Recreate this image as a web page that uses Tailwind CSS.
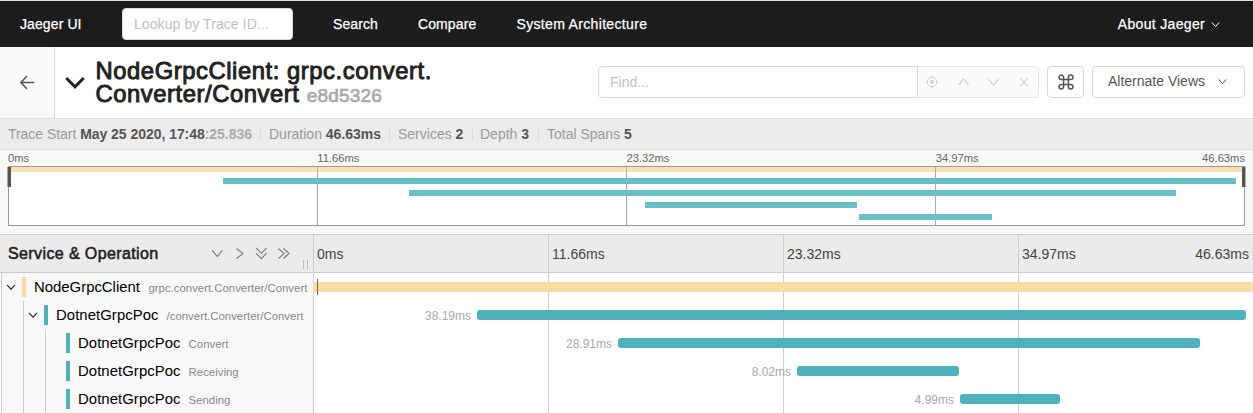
<!DOCTYPE html>
<html lang="en">
<head>
<meta charset="utf-8">
<title>Jaeger UI</title>
<script src="https://cdn.jsdelivr.net/npm/@tailwindcss/browser@4"></script>
</head>
<body class="w-[1253px] h-[413px] overflow-hidden bg-white font-['Liberation_Sans',Arial,sans-serif] text-[14px] text-[#555] whitespace-nowrap">

<!-- Top navigation -->
<nav class="h-[47px] bg-[#1d1d1d] border-t border-[#d9dfe1] flex items-center text-white tracking-[0.33px] [-webkit-text-stroke:0.25px_white]">
  <span class="ml-5 w-[102px] tracking-[0.1px]">Jaeger UI</span>
  <div class="w-[171px] h-8 rounded bg-white border border-[#d9d9d9] px-[11px] flex items-center text-[#bfbfbf] tracking-[0.08px] [-webkit-text-stroke:0]">Lookup by Trace ID...</div>
  <span class="ml-10 w-[85px] tracking-[0.1px]">Search</span>
  <span class="w-[98.5px] tracking-[0.1px]">Compare</span>
  <span>System Architecture</span>
  <span class="ml-auto mr-[33px] flex items-center gap-[6px]">About Jaeger
    <svg class="w-[9px] h-[9px]" viewBox="0 0 9 9" fill="none" stroke="#fff" stroke-width="1"><path d="M.8 2.4 4.5 6.6 8.2 2.4"/></svg>
  </span>
</nav>

<!-- Trace title bar -->
<header class="h-[72px] border-b border-[#e0e0e0] flex items-center">
  <div class="w-[55px] h-full bg-[#fafafa] border-r border-[#d8d8d8] flex items-center">
    <svg class="ml-5 w-[15px] h-[15px]" viewBox="0 0 15 15" fill="none" stroke="#555" stroke-width="1.5"><path d="M14.3 7.5H1M7 .9.9 7.5 7 14.1"/></svg>
  </div>
  <svg class="ml-[10px] w-5 h-[14px]" viewBox="0 0 20 14" fill="none" stroke="#222" stroke-width="3"><path d="M1.3 2 10 10.8 18.7 2"/></svg>
  <h1 class="ml-[10.5px] text-[23.8px] leading-[23px] tracking-[0.56px] text-[#222] [-webkit-text-stroke:0.95px_#222] pt-[1px]">NodeGrpcClient: grpc.convert.<br>Converter/Convert <span class="text-[19px] tracking-[0.2px] text-[#aaa] [-webkit-text-stroke:0.7px_#aaa]">e8d5326</span></h1>
  <div class="ml-auto mr-2 mb-[2px] flex items-center">
    <div class="w-80 h-8 border border-[#d9d9d9] rounded-l px-[11px] pt-[2px] flex items-center text-[#bfbfbf]">Find...</div>
    <div class="w-[121px] h-8 border border-l-0 border-[#e6e6e6] rounded-r bg-[#fafafa] flex items-center text-[#d0d0d0]">
      <svg class="ml-2 mt-px w-3 h-3" viewBox="0 0 12 12" fill="none" stroke="currentColor"><circle cx="6" cy="6" r="4.8"/><circle cx="6" cy="6" r="2" fill="currentColor" stroke="none"/><path d="M6 0v2M6 10v2M0 6h2M10 6h2"/></svg>
      <svg class="ml-5 w-[11px] h-3" viewBox="0 0 11 12" fill="none" stroke="currentColor" stroke-width="1.1"><path d="M.5 8.8 5.5 2.8l5 6"/></svg>
      <svg class="ml-[19px] mt-px w-[11px] h-3" viewBox="0 0 11 12" fill="none" stroke="currentColor" stroke-width="1.1"><path d="M.5 3.2 5.5 9.2l5-6"/></svg>
      <svg class="ml-5 mt-px w-[10px] h-3" viewBox="0 0 10 12" fill="none" stroke="currentColor" stroke-width="1.1"><path d="m.8 1.8 8.4 8.6M9.2 1.8.8 10.4"/></svg>
    </div>
    <div class="ml-2 w-[37px] h-8 border border-[#d9d9d9] rounded flex items-center justify-center">
      <svg class="w-4 h-4" viewBox="0 0 16 16" fill="none" stroke="#555" stroke-width="1.5"><path d="M5.6 5.6V3.3A2.3 2.3 0 1 0 3.3 5.6h9.4a2.3 2.3 0 1 0-2.3-2.3v9.4a2.3 2.3 0 1 0 2.3-2.3H3.3a2.3 2.3 0 1 0 2.3 2.3Z"/></svg>
    </div>
    <div class="ml-2 w-[153px] h-8 border border-[#d9d9d9] rounded pl-[15px] flex items-center">Alternate Views
      <svg class="ml-[13px] w-[9px] h-[9px]" viewBox="0 0 9 9" fill="none" stroke="#555"><path d="M.8 2.4 4.5 6.6 8.2 2.4"/></svg>
    </div>
  </div>
</header>

<!-- Trace summary -->
<section class="h-[31px] bg-[#ececec] border-b border-[#e0e0e0] px-2 flex items-center text-[#999]">
  <span class="w-[253px] border-r border-[#ddd] leading-[13px] tracking-[-0.04px]">Trace Start <b class="text-[#555]">May 25 2020, 17:48</b><b class="text-[#aaa]">:25.836</b></span>
  <span class="pl-2 w-[129px] border-[#ddd] border-r leading-[13px]">Duration <b class="text-[#555]">46.63ms</b></span>
  <span class="pl-2 w-[83px] border-[#ddd] border-r leading-[13px]">Services <b class="text-[#555]">2</b></span>
  <span class="pl-[7px] w-[66px] border-[#ddd] border-r leading-[13px]">Depth <b class="text-[#555]">3</b></span>
  <span class="pl-2 leading-[13px]">Total Spans <b class="text-[#555]">5</b></span>
</section>

<!-- Minimap -->
<section class="h-[85px] bg-[#f8f8f8] border-b border-[#ccc] px-2">
  <div class="h-4 grid grid-cols-4 text-[11.2px] leading-[17px] text-[#666]">
    <span>0ms</span><span>11.66ms</span><span>23.32ms</span>
    <span class="flex justify-between"><span>34.97ms</span><span>46.63ms</span></span>
  </div>
  <div class="relative h-[60px] w-[1237px] border border-[#999] bg-white">
    <div class="flex flex-col gap-[6px]">
      <div class="h-[5px] bg-[#f8e1b5]"></div>
      <div class="h-[6px] bg-[#66c0c8]" style="margin-left:214px;width:1013px"></div>
      <div class="h-[6px] bg-[#66c0c8]" style="margin-left:400px;width:767px"></div>
      <div class="h-[6px] bg-[#66c0c8]" style="margin-left:635.5px;width:212.5px"></div>
      <div class="h-[6px] bg-[#66c0c8]" style="margin-left:850px;width:132.5px"></div>
    </div>
    <div class="absolute inset-y-0 -left-px w-[1236px] grid grid-cols-4">
      <i></i><i class="border-l border-[#aaa]"></i><i class="border-l border-[#aaa]"></i><i class="border-l border-[#aaa]"></i>
    </div>
    <div class="absolute -left-[2px] top-0 w-[4px] h-5 bg-[#555] border-l border-[#aaa]"></div>
    <div class="absolute -right-[2px] top-0 w-[4px] h-5 bg-[#555] border-r border-[#aaa]"></div>
  </div>
</section>

<!-- Timeline header -->
<section class="h-[38px] bg-[#ebebeb] border-b border-[#ccc] flex text-[#444]">
  <div class="w-[313px] pl-2 flex items-center">
    <h2 class="w-[204px] pt-px text-[16px] tracking-[0.39px] text-[#222] [-webkit-text-stroke:0.55px_#222]">Service &amp; Operation</h2>
    <svg class="w-[78px] h-[14px]" viewBox="0 0 78 14" fill="none" stroke="#777" stroke-width="1.1"><path d="M.3 3.2 5.3 9.7 10.3 3.2M24.5 1.5 31 6.5l-6.5 5M44 .9l5.3 5.4L54.6.9M44 6.1l5.3 5.6 5.3-5.6M66.5 1.5 72 6.5l-5.5 5M71.6 1.5 77.200 6.500l-5.600 5"/></svg>
    <div class="self-end mb-[3px] ml-[13px] w-[5px] h-[9px] border-x border-[#bbb]"></div>
  </div>
  <div class="w-[940px] grid grid-cols-4 leading-[38px]">
    <span class="border-l border-[#ccc] pl-[3px]">0ms</span>
    <span class="border-l border-[#ccc] pl-[3px]">11.66ms</span>
    <span class="border-l border-[#ccc] pl-[3px]">23.32ms</span>
    <span class="border-l border-[#ccc] pl-[3px] pr-1 flex justify-between"><span>34.97ms</span><span>46.63ms</span></span>
  </div>
</section>

<!-- Span rows -->
<main class="h-[140px] flex">
  <div class="w-[313px] bg-[#f8f8f8] border-l border-[#ccc] ml-px -mr-px text-[11.4px] text-[#888] flex flex-col">
    <div class="h-7 flex items-center">
      <svg class="ml-1 w-[10px] h-[10px]" viewBox="0 0 10 10" fill="none" stroke="#222" stroke-width="1.1"><path d="M1 2.800 5 7.200 9 2.800"/></svg>
      <div class="ml-[6px] w-1 h-5 bg-[#f6dba4]"></div>
      <span class="ml-2 text-[14.9px] text-black">NodeGrpcClient</span><span class="ml-[8.5px] pt-[3px]">grpc.convert.Converter/Convert</span>
    </div>
    <div class="h-7 flex items-center">
      <div class="ml-[21px] w-px h-full bg-[#ccc]"></div>
      <svg class="ml-1 w-[10px] h-[10px]" viewBox="0 0 10 10" fill="none" stroke="#222" stroke-width="1.1"><path d="M1 2.800 5 7.200 9 2.800"/></svg>
      <div class="ml-[6px] w-1 h-5 bg-[#4db2bb]"></div>
      <span class="ml-2 text-[14.9px] tracking-[0.06px] text-black">DotnetGrpcPoc</span><span class="ml-2 pt-[3px]">/convert.Converter/Convert</span>
    </div>
    <div class="h-7 flex items-center">
      <div class="ml-[21px] w-[23px] h-full border-x border-[#ccc]"></div>
      <div class="ml-5 w-1 h-5 bg-[#4db2bb]"></div>
      <span class="ml-2 text-[14.9px] tracking-[0.06px] text-black">DotnetGrpcPoc</span><span class="ml-2 pt-[3px]">Convert</span>
    </div>
    <div class="h-7 flex items-center">
      <div class="ml-[21px] w-[23px] h-full border-x border-[#ccc]"></div>
      <div class="ml-5 w-1 h-5 bg-[#4db2bb]"></div>
      <span class="ml-2 text-[14.9px] tracking-[0.06px] text-black">DotnetGrpcPoc</span><span class="ml-2 pt-[3px]">Receiving</span>
    </div>
    <div class="h-7 flex items-center">
      <div class="ml-[21px] w-[23px] h-full border-x border-[#ccc]"></div>
      <div class="ml-5 w-1 h-5 bg-[#4db2bb]"></div>
      <span class="ml-2 text-[14.9px] tracking-[0.06px] text-black">DotnetGrpcPoc</span><span class="ml-2 pt-[3px]">Sending</span>
    </div>
  </div>
  <div class="relative w-[940px] text-[12px] text-[#aaa]">
    <div class="absolute inset-0 grid grid-cols-4">
      <i class="border-l border-[#d0d0d0]"></i><i class="border-l border-[#d0d0d0]"></i><i class="border-l border-[#d0d0d0]"></i><i class="border-l border-[#d0d0d0]"></i>
    </div>
    <div class="relative">
      <div class="h-7 flex items-center">
        <div class="relative w-full h-[10px] rounded-[3px] bg-[#f6dba4]"><div class="absolute left-1 -top-[3px] w-px h-4 bg-[#77694d]"></div></div>
      </div>
      <div class="h-7 flex items-center">
        <span class="text-right pt-px pr-[6px]" style="width:164px">38.19ms</span><div class="h-[10px] rounded-[3px] bg-[#4db2bb]" style="width:769px"></div>
      </div>
      <div class="h-7 flex items-center">
        <span class="text-right pt-px pr-[6px]" style="width:305px">28.91ms</span><div class="h-[10px] rounded-[3px] bg-[#4db2bb]" style="width:582px"></div>
      </div>
      <div class="h-7 flex items-center">
        <span class="text-right pt-px pr-[6px]" style="width:484px">8.02ms</span><div class="h-[10px] rounded-[3px] bg-[#4db2bb]" style="width:162px"></div>
      </div>
      <div class="h-7 flex items-center">
        <span class="text-right pt-px pr-[6px]" style="width:647px">4.99ms</span><div class="h-[10px] rounded-[3px] bg-[#4db2bb]" style="width:100px"></div>
      </div>
    </div>
  </div>
</main>
</body>
</html>
